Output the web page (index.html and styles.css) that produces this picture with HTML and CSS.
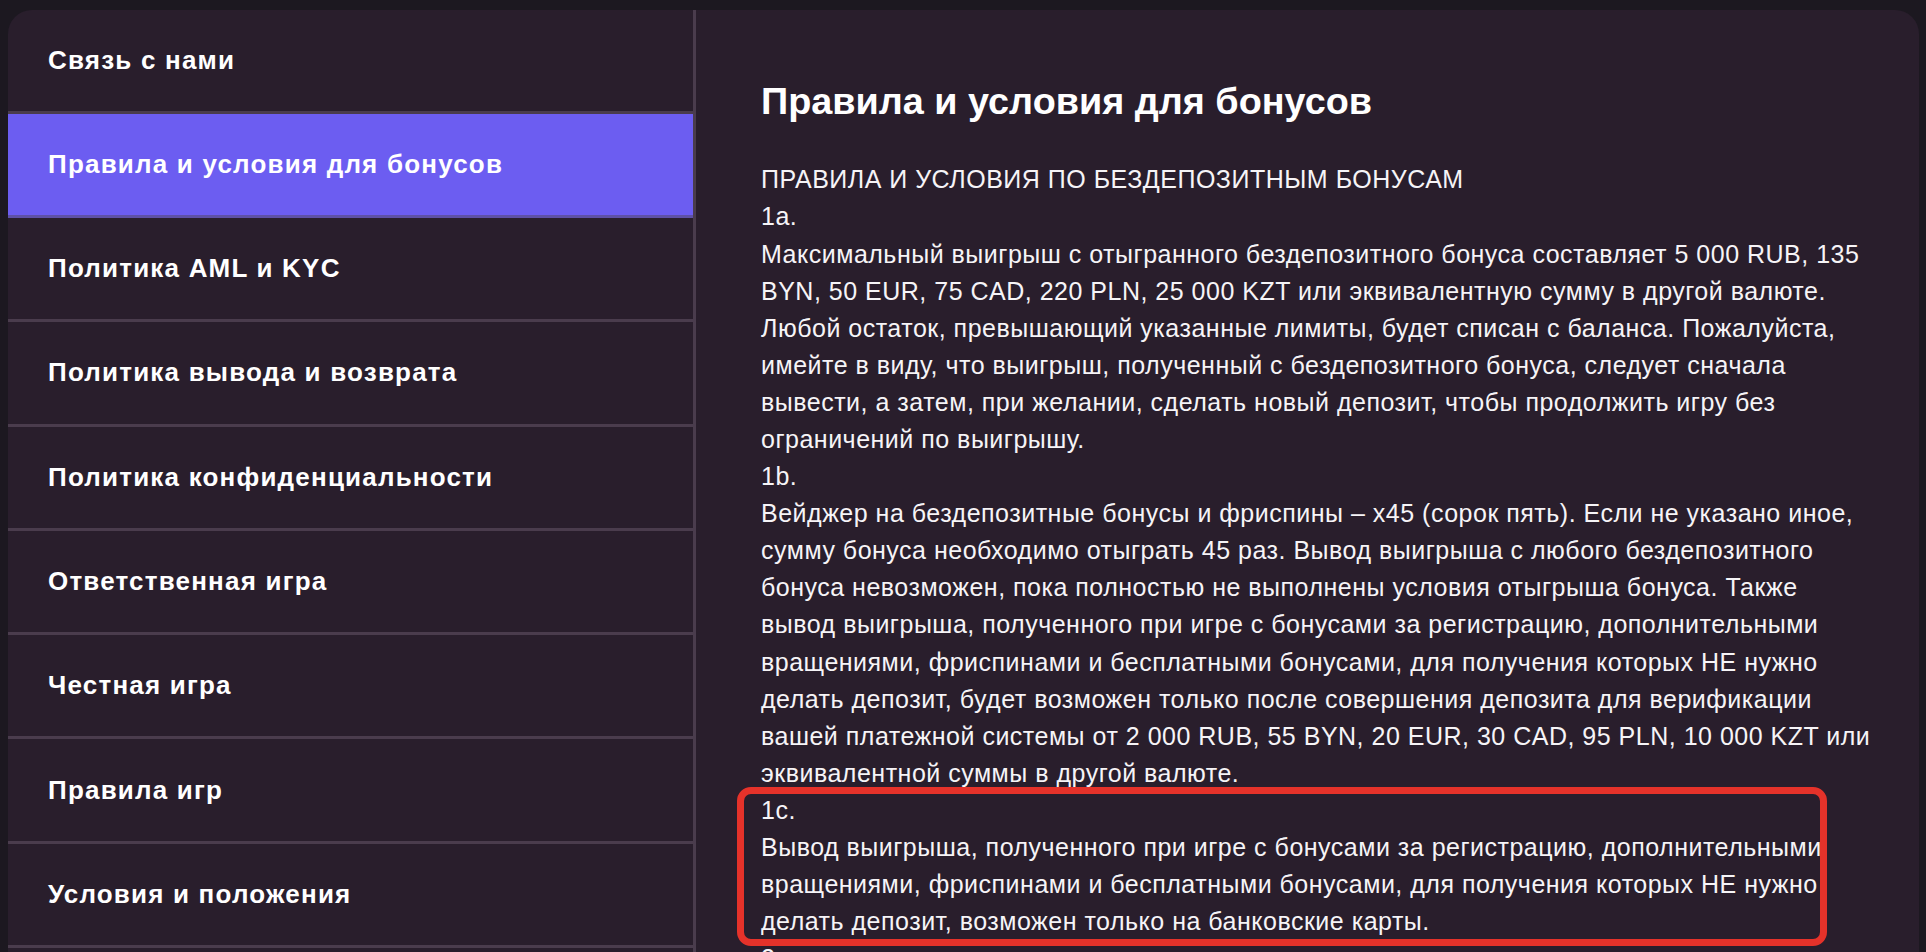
FILE: index.html
```html
<!DOCTYPE html>
<html lang="ru">
<head>
    <meta charset="UTF-8">
    <meta name="viewport" content="width=device-width, initial-scale=1.0">
    <title>Правила и условия для бонусов</title>
    <link rel="stylesheet" href="styles.css">
</head>
<body>

    <div class="page">
        <div class="info-card">
            <!-- Left menu -->
            <nav class="side-menu">
                <a class="side-link" href="#">Связь с нами</a>
                <a class="side-link active" href="#">Правила и условия для бонусов</a>
                <a class="side-link" href="#">Политика AML и KYC</a>
                <a class="side-link" href="#">Политика вывода и возврата</a>
                <a class="side-link" href="#">Политика конфиденциальности</a>
                <a class="side-link" href="#">Ответственная игра</a>
                <a class="side-link" href="#">Честная игра</a>
                <a class="side-link" href="#">Правила игр</a>
                <a class="side-link" href="#">Условия и положения</a>
            </nav>

            <!-- Page text -->
            <main class="info-content">
                <h1>Правила и условия для бонусов</h1>

                <div class="rules">
                    <p>ПРАВИЛА И УСЛОВИЯ ПО БЕЗДЕПОЗИТНЫМ БОНУСАМ</p>

                    <div class="rule-block">
                        <p>1a.</p>
                        <p>Максимальный выигрыш с отыгранного бездепозитного бонуса составляет 5 000 RUB, 135<br>
                        BYN, 50 EUR, 75 CAD, 220 PLN, 25 000 KZT или эквивалентную сумму в другой валюте.<br>
                        Любой остаток, превышающий указанные лимиты, будет списан с баланса. Пожалуйста,<br>
                        имейте в виду, что выигрыш, полученный с бездепозитного бонуса, следует сначала<br>
                        вывести, а затем, при желании, сделать новый депозит, чтобы продолжить игру без<br>
                        ограничений по выигрышу.</p>
                    </div>

                    <div class="rule-block">
                        <p>1b.</p>
                        <p>Вейджер на бездепозитные бонусы и фриспины – x45 (сорок пять). Если не указано иное,<br>
                        сумму бонуса необходимо отыграть 45 раз. Вывод выигрыша с любого бездепозитного<br>
                        бонуса невозможен, пока полностью не выполнены условия отыгрыша бонуса. Также<br>
                        вывод выигрыша, полученного при игре с бонусами за регистрацию, дополнительными<br>
                        вращениями, фриспинами и бесплатными бонусами, для получения которых НЕ нужно<br>
                        делать депозит, будет возможен только после совершения депозита для верификации<br>
                        вашей платежной системы от 2 000 RUB, 55 BYN, 20 EUR, 30 CAD, 95 PLN, 10 000 KZT или<br>
                        эквивалентной суммы в другой валюте.</p>
                    </div>

                    <div class="rule-block marked">
                        <p>1c.</p>
                        <p>Вывод выигрыша, полученного при игре с бонусами за регистрацию, дополнительными<br>
                        вращениями, фриспинами и бесплатными бонусами, для получения которых НЕ нужно<br>
                        делать депозит, возможен только на банковские карты.</p>
                    </div>

                    <div class="rule-block">
                        <p>2.</p>
                        <p>ПРАВИЛА И УСЛОВИЯ ПО ДЕПОЗИТНЫМ БОНУСАМ</p>
                    </div>
                </div>
            </main>
        </div>
    </div>

</body>
</html>
```

FILE: styles.css
```css
* {
    box-sizing: border-box;
    margin: 0;
    padding: 0;
}

body {
    background-color: #1c1820;
    font-family: "Liberation Sans", Arial, sans-serif;
    color: #fff;
    overflow: hidden;
}

.page {
    padding: 10px 7px 0 8px;
}

.info-card {
    display: flex;
    min-height: 1300px;
    background-color: #291e2c;
    border-radius: 24px 24px 0 0;
    overflow: hidden;
}

/* Left menu */
.side-menu {
    flex: 0 0 688px;
    display: flex;
    flex-direction: column;
    border-right: 3px solid #4a3c4d;
}

.side-link {
    display: flex;
    align-items: center;
    height: 104.3px;
    padding: 0 40px;
    border-bottom: 3px solid #4a3c4d;
    color: #fff;
    font-size: 26px;
    font-weight: 700;
    letter-spacing: 1.2px;
    text-decoration: none;
}

.side-link:first-child {
    height: 103.7px;
}

.side-link.active {
    background-color: #6c5df1;
    border-bottom-color: #5e51a6;
}

/* Text column */
.info-content {
    flex: 1;
    padding: 69px 40px 0 65px;
}

.info-content h1 {
    font-size: 37.8px;
    font-weight: 700;
    line-height: 1.2;
    margin-bottom: 37px;
}

.rules {
    font-size: 25px;
    line-height: 37.1px;
    letter-spacing: 0.5px;
    color: #f6f4f7;
}

.rule-block {
    position: relative;
}

/* Red frame drawn over the 1c block */
.rule-block.marked::after {
    content: "";
    position: absolute;
    top: -5px;
    bottom: -6px;
    left: -24px;
    right: 52px;
    border: 7px solid #e5322a;
    border-radius: 14px;
    pointer-events: none;
}
```
